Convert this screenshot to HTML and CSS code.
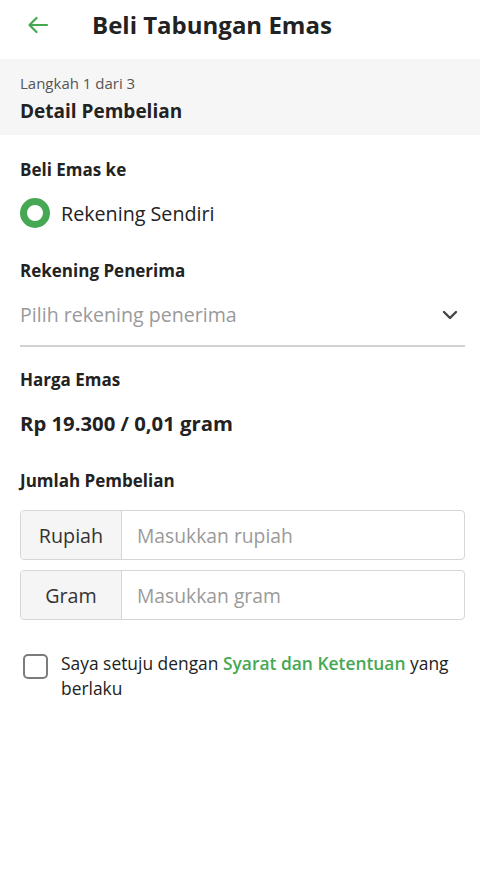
FILE: index.html
```html
<!DOCTYPE html>
<html lang="id">
<head>
<meta charset="utf-8">
<title>Beli Tabungan Emas</title>
<link rel="stylesheet" href="styles.css">
</head>
<body>
<header class="topbar">
  <svg class="back" width="24" height="24" viewBox="0 0 24 24" fill="none" stroke="#46a652" stroke-width="2.2" stroke-linecap="round" stroke-linejoin="round"><path d="M21 12H3.5M10.5 5l-7 7 7 7"/></svg>
  <h1 class="title">Beli Tabungan Emas</h1>
</header>
<section class="step">
  <div class="step-count">Langkah 1 dari 3</div>
  <div class="step-name">Detail Pembelian</div>
</section>
<main class="form">
  <div class="label first">Beli Emas ke</div>
  <div class="radio-row">
    <span class="radio"></span>
    <span class="radio-text">Rekening Sendiri</span>
  </div>
  <div class="label gap-l">Rekening Penerima</div>
  <div class="select">
    <span class="select-text">Pilih rekening penerima</span>
    <svg class="chev" width="16" height="10" viewBox="0 0 16 10" fill="none" stroke="#444" stroke-width="2.4" stroke-linecap="round" stroke-linejoin="round"><path d="M2 2l6 6 6-6"/></svg>
  </div>
  <div class="label gap-m">Harga Emas</div>
  <div class="price">Rp 19.300 / 0,01 gram</div>
  <div class="label gap-xl">Jumlah Pembelian</div>
  <div class="input first-input">
    <span class="prefix">Rupiah</span>
    <span class="placeholder">Masukkan rupiah</span>
  </div>
  <div class="input second-input">
    <span class="prefix">Gram</span>
    <span class="placeholder">Masukkan gram</span>
  </div>
  <div class="agree">
    <span class="checkbox"></span>
    <p class="agree-text">Saya setuju dengan <b class="link">Syarat dan Ketentuan</b> yang berlaku</p>
  </div>
</main>
</body>
</html>
```

FILE: styles.css
```css
* { box-sizing: border-box; }
html, body { margin: 0; padding: 0; background: #fff; }
body {
  font-family: "Open Sans", "Lato", sans-serif;
  color: #222;
  width: 480px;
}
.topbar {
  height: 59px;
  display: flex;
  align-items: center;
  padding: 0 0 9px 26px;
  background: #fff;
}
.back { display: block; }
.title {
  margin: 0 0 0 42px;
  font-size: 24px;
  font-weight: 700;
  color: #222;
  line-height: 30px;
}
.step {
  background: #f6f6f6;
  height: 76px;
  padding: 14px 20px 0;
}
.step-count {
  font-size: 15px;
  line-height: 20px;
  color: #555;
}
.step-name {
  margin-top: 5px;
  font-size: 19px;
  line-height: 26px;
  font-weight: 700;
  color: #222;
}
.form { padding: 0 15px 0 20px; }
.label {
  font-size: 17px;
  line-height: 22px;
  font-weight: 700;
  color: #222;
}
.label.first { margin-top: 24px; }
.label.gap-l { margin-top: 32px; }
.label.gap-m { margin-top: 22px; }
.label.gap-xl { margin-top: 34px; }
.radio-row {
  margin-top: 17px;
  height: 30px;
  display: flex;
  align-items: center;
  gap: 11px;
}
.radio {
  width: 30px;
  height: 30px;
  border-radius: 50%;
  border: 7px solid #47a854;
  background: #fff;
}
.radio-text { font-size: 19.7px; color: #222; }
.select {
  margin-top: 20px;
  display: flex;
  align-items: center;
  justify-content: space-between;
  height: 26px;
  box-sizing: content-box;
  padding-bottom: 17px;
  border-bottom: 2px solid #d2d2d2;
}
.select-text { font-size: 19.6px; line-height: 26px; color: #9a9a9a; }
.chev { margin-right: 7px; }
.price {
  margin-top: 19px;
  font-size: 20.3px;
  line-height: 26px;
  font-weight: 700;
  color: #222;
}
.input {
  height: 50px;
  display: flex;
  border: 1.5px solid #d6d6d6;
  border-radius: 4px;
  overflow: hidden;
}
.first-input { margin-top: 18px; }
.second-input { margin-top: 10px; }
.prefix {
  width: 101px;
  flex: none;
  background: #f5f5f5;
  border-right: 1.5px solid #d6d6d6;
  display: flex;
  align-items: center;
  justify-content: center;
  font-size: 19.7px;
  color: #333;
}
.placeholder {
  display: flex;
  align-items: center;
  padding-left: 15px;
  font-size: 19.3px;
  color: #9a9a9a;
}
.agree {
  margin-top: 31px;
  display: flex;
  align-items: flex-start;
  gap: 13px;
  padding-left: 3px;
}
.checkbox {
  flex: none;
  width: 25px;
  height: 25px;
  margin-top: 3px;
  border: 2px solid #7c7c7c;
  border-radius: 5px;
}
.agree-text {
  margin: 0;
  font-size: 17.4px;
  line-height: 25px;
  color: #222;
}
.link { color: #47a854; font-weight: 600; }
```
